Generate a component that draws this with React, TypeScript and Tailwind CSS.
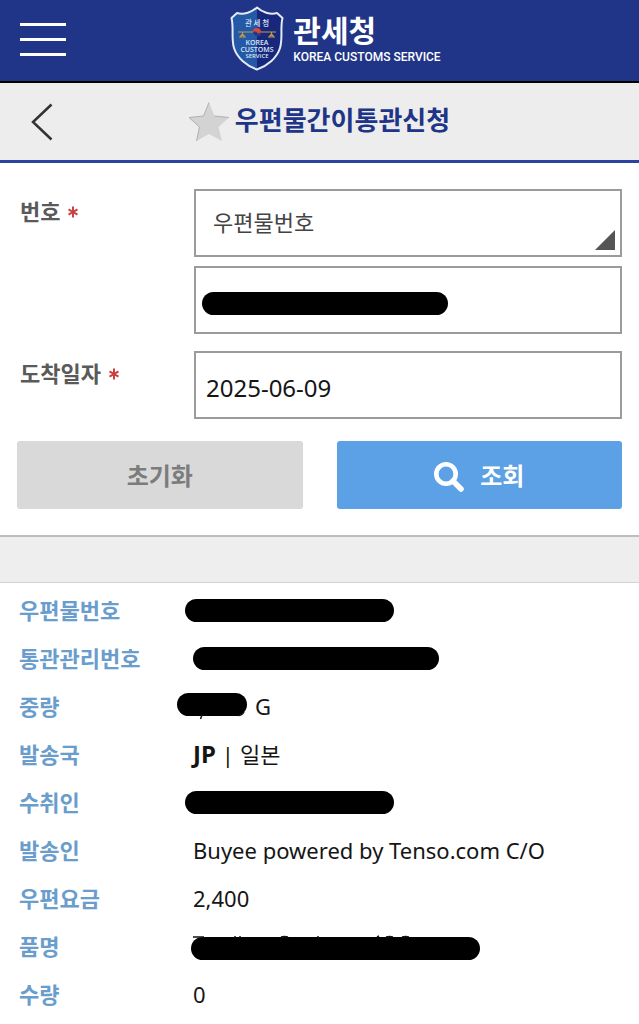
import type { ReactNode } from "react";

function Redacted({ className, children }: { className: string; children?: ReactNode }) {
  return (
    <span aria-hidden="true" className={`block h-[23px] rounded-full bg-black ${className}`}>
      {children}
    </span>
  );
}

function Shield() {
  return (
    <svg width="54" height="65" viewBox="0 0 54 65" aria-hidden="true">
      <defs>
        <clipPath id="shield">
          <path d="M27 1.5C22 6 14 9 7 7L1.500 12C4 22 1 32 4 42C7 52 17 60 27 63.500C37 60 47 52 50 42C53 32 50 22 52.500 12L47 7C40 9 32 6 27 1.500Z" />
        </clipPath>
      </defs>
      <g clipPath="url(#shield)">
        <rect width="27" height="65" fill="#2359a6" />
        <rect x="27" width="27" height="65" fill="#16277c" />
      </g>
      <path d="M27 1.500C22 6 14 9 7 7L1.500 12C4 22 1 32 4 42C7 52 17 60 27 63.500C37 60 47 52 50 42C53 32 50 22 52.500 12L47 7C40 9 32 6 27 1.500Z" fill="none" stroke="#e4e9f4" strokeWidth="2" strokeLinejoin="round" />
      <g stroke="#bf9a4d" fill="none" strokeWidth="1.200">
        <path d="M8 26H46M12.500 26V29M41.500 26V29M10 31L12.500 28L15 31ZM39 31L41.500 28L44 31Z" />
      </g>
      <circle cx="27" cy="26" r="4" fill="#d9473e" />
      <path d="M23 26C23 28.500 25 30 27 30S31 28.500 31 26C29.500 28 27.500 27.500 27 26.500S24.500 25 23 26Z" fill="#1b3c8c" />
      <g fill="#dfe6f4" textAnchor="middle">
        <text x="27" y="19.500" fontSize="7.500" fontWeight="500" fontFamily="Noto Sans CJK KR, sans-serif">관 세 청</text>
        <g fontWeight="600" fontFamily="Open Sans, sans-serif">
          <text x="27" y="38.500" fontSize="7">KOREA</text>
          <text x="27" y="45.500" fontSize="7">CUSTOMS</text>
          <text x="27" y="51.500" fontSize="6">SERVICE</text>
        </g>
      </g>
    </svg>
  );
}

function Required() {
  return (
    <svg className="mt-[3px]" width="10" height="12" viewBox="0 0 10 12" stroke="#cc4040" strokeWidth="2" role="img" aria-label="필수">
      <path d="M5 .500V11.500M.500 3.300L9.500 8.700M9.500 3.300L.500 8.700" />
    </svg>
  );
}

const fieldClass = "block h-[68px] w-full appearance-none rounded-none border-2 border-[#9b9b9b] bg-white outline-none";
const labelClass = "flex h-[42px] w-[177px] shrink-0 items-center gap-2 pl-[3px] text-[22px] font-bold text-[#5a5a5a]";

function Row({ label, children }: { label: string; children: ReactNode }) {
  return (
    <div className="flex h-12 items-center">
      <dt className="w-[174px] shrink-0 pb-1 text-[22px] font-bold text-[#6a9dcc]">{label}</dt>
      <dd className="flex min-w-0 grow items-center pb-[2px] font-['Noto_Sans','Noto_Sans_CJK_KR',sans-serif] text-[22px] text-[#151515]">{children}</dd>
    </div>
  );
}

export default function App() {
  return (
    <div className="min-h-screen bg-white font-['Noto_Sans_CJK_KR',sans-serif]">
      <header className="grid h-[83px] grid-cols-[1fr_auto_1fr] items-center border-b-2 border-black bg-[#203587] px-5">
        <button type="button" aria-label="메뉴" className="flex w-[46px] flex-col gap-3 pb-[3px]">
          <span className="h-[3px] bg-white" />
          <span className="h-[3px] bg-white" />
          <span className="h-[3px] bg-white" />
        </button>
        <a href="#home" className="flex items-center gap-[9px] pb-1 pl-8 text-white">
          <Shield />
          <span className="flex flex-col">
            <span className="text-[30px] leading-9 font-bold">관세청</span>
            <span className="font-['Roboto',sans-serif] text-xs leading-5 font-medium">KOREA CUSTOMS SERVICE</span>
          </span>
        </a>
      </header>

      <div className="grid h-20 grid-cols-[1fr_auto_1fr] items-center border-b-3 border-[#2a43a0] bg-[#ededed] px-[31px]">
        <button type="button" aria-label="뒤로" className="w-6">
          <svg width="22" height="38" viewBox="0 0 22 38" fill="none" stroke="#333" strokeWidth="2.500">
            <path d="M20.500 1.500L2 19L20.500 36.500" />
          </svg>
        </button>
        <div className="flex items-center gap-[6px]">
          <button type="button" aria-label="즐겨찾기">
            <svg width="40" height="40" viewBox="0 0 40 40">
              <path d="M20 .500L25.500 14L40 15.500L29.500 25L33 39L20 32L7.500 39L10.500 25L0 15.500L14.500 14Z" fill="#d3d3d3" />
              <path d="M7.500 39L10.500 25L0 15.500L14.500 14L20 .500M25.500 14L40 15.500" fill="none" stroke="#b0b0b0" />
            </svg>
          </button>
          <h1 className="pb-[6px] text-[26px] leading-9 font-bold text-[#203587]">우편물간이통관신청</h1>
        </div>
      </div>

      <form className="px-[17px] py-[26px]" onSubmit={(e) => e.preventDefault()}>
        <div className="flex">
          <label htmlFor="kind" className={labelClass}>번호<Required /></label>
          <div className="flex min-w-0 grow flex-col gap-[9px]">
            <div className="relative">
              <select id="kind" className={`${fieldClass} px-[17px] pb-[3px] text-[22px] text-[#444]`}>
                <option>우편물번호</option>
              </select>
              <svg className="pointer-events-none absolute right-[7px] bottom-[7px]" width="20" height="20" viewBox="0 0 20 20">
                <path d="M20 0V20H0Z" fill="#555" />
              </svg>
            </div>
            <div className="relative">
              <input type="text" aria-label="우편물번호" className={fieldClass} />
              <Redacted className="pointer-events-none absolute top-[26px] left-2 w-[246px]" />
            </div>
          </div>
        </div>
        <div className="mt-[17px] flex">
          <label htmlFor="date" className={labelClass}>도착일자<Required /></label>
          <div className="min-w-0 grow">
            <input id="date" type="text" defaultValue="2025-06-09" className={`${fieldClass} px-[10px] pt-1 font-['Noto_Sans',sans-serif] text-2xl text-[#151515]`} />
          </div>
        </div>
        <div className="mt-[22px] grid grid-cols-2 gap-[34px] text-2xl font-bold">
          <button type="reset" className="h-[68px] rounded-[3px] bg-[#d9d9d9] text-[#7c7c7c]">초기화</button>
          <button type="submit" className="flex h-[68px] items-center justify-center gap-4 rounded-[3px] bg-[#5ca1e6] text-white">
            <svg className="mt-1" width="30" height="30" viewBox="0 0 30 30" fill="none" stroke="currentColor" aria-hidden="true">
              <circle cx="12" cy="12" r="9.700" strokeWidth="4.600" />
              <path d="M19 19L27 27" strokeWidth="5.500" strokeLinecap="round" />
            </svg>
            조회
          </button>
        </div>
      </form>

      <div className="h-12 border-t-2 border-b border-t-[#bdbdbd] border-b-[#d3d3d6] bg-[#eee]" />

      <dl className="px-[19px] pt-1">
        <Row label="우편물번호"><Redacted className="-ml-2 w-[209px]" /></Row>
        <Row label="통관관리번호"><Redacted className="w-[246px]" /></Row>
        <Row label="중량">
          <Redacted className="mr-2 mb-1 -ml-4 w-[70px]">
            <svg width="70" height="27" viewBox="0 0 70 27" fill="none" stroke="#151515" strokeWidth="1.500">
              <path d="M25 22L23.500 26M61 22.500Q65 22.500 67 19" />
            </svg>
          </Redacted>
          G
        </Row>
        <Row label="발송국"><b className="text-2xl">JP</b><span className="mx-[6px]">|</span>일본</Row>
        <Row label="수취인"><Redacted className="-ml-2 w-[209px]" /></Row>
        <Row label="발송인">Buyee powered by Tenso.com C/O</Row>
        <Row label="우편요금">2,400</Row>
        <Row label="품명">
          <Redacted className="mt-1 -ml-[2px] w-[289px]">
            <svg className="overflow-visible" width="289" height="23" viewBox="0 0 289 23" fill="none" stroke="#151515" strokeWidth="1.500">
              <path d="M2 0H13M44 -1V1M49 -1V1M90 0Q93.500 -1 97 0M127 -1V1M186 0L188 -1M195 0Q198.500 -1 202 0M211 0Q214.500 -1 218 0" />
            </svg>
          </Redacted>
        </Row>
        <Row label="수량">0</Row>
      </dl>
    </div>
  );
}
